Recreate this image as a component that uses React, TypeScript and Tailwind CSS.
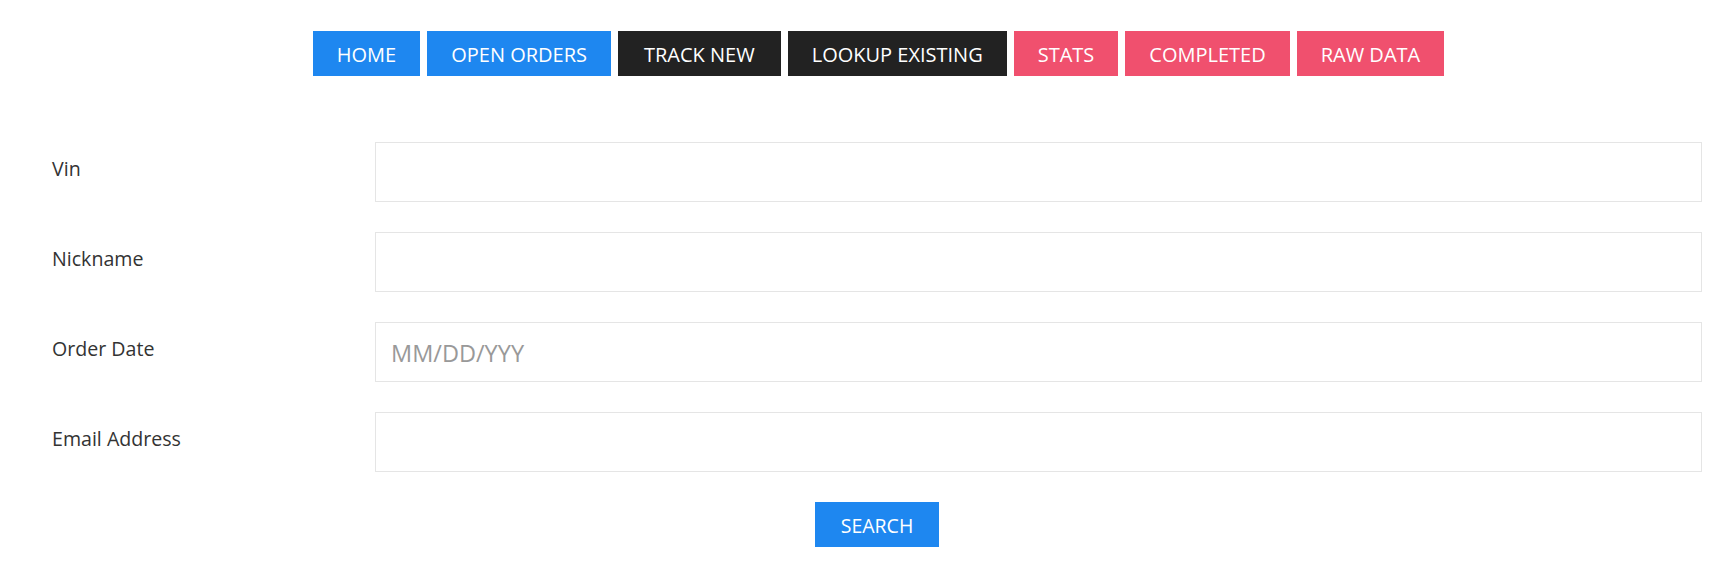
import React from "react";

const navItems: { label: string; cls: string }[] = [
  { label: "HOME", cls: "bg-[#1e87f0] px-6" },
  { label: "OPEN ORDERS", cls: "bg-[#1e87f0] px-6" },
  { label: "TRACK NEW", cls: "bg-[#222222] px-[26px]" },
  { label: "LOOKUP EXISTING", cls: "bg-[#222222] px-6" },
  { label: "STATS", cls: "bg-[#f0506e] px-6" },
  { label: "COMPLETED", cls: "bg-[#f0506e] px-6" },
  { label: "RAW DATA", cls: "bg-[#f0506e] px-6" },
];

const fields: { label: string; placeholder?: string }[] = [
  { label: "Vin" },
  { label: "Nickname" },
  { label: "Order Date", placeholder: "MM/DD/YYY" },
  { label: "Email Address" },
];

export default function App() {
  return (
    <div className="min-h-screen bg-white font-['Open_Sans',sans-serif]">
      <nav className="flex justify-center gap-[7px] pt-[31px] pl-[24px]">
        {navItems.map((n) => (
          <a
            key={n.label}
            href="#"
            className={`${n.cls} flex h-[45px] items-center pt-[3px] text-[20px] leading-none text-white`}
          >
            {n.label}
          </a>
        ))}
      </nav>
      <form className="mt-[66px] flex flex-col gap-[30px] pl-[52px] pr-[31px]">
        {fields.map((f) => (
          <div key={f.label} className="flex items-start">
            <label className="w-[323px] shrink-0 pt-[13px] text-[19.6px] leading-[28px] text-[#333333]">
              {f.label}
            </label>
            <input
              type="text"
              placeholder={f.placeholder}
              className="h-[60px] min-w-0 flex-1 border border-[#e5e5e5] bg-white pl-[15px] pr-4 pt-[2px] text-[23.5px] text-[#666] outline-none placeholder:text-[#999999]"
            />
          </div>
        ))}
      </form>
      <div className="mt-[30px] flex justify-center pl-[21px]">
        <button
          type="button"
          className="flex h-[45px] items-center bg-[#1e87f0] px-[26px] pt-[3px] text-[19.5px] leading-none text-white"
        >
          SEARCH
        </button>
      </div>
    </div>
  );
}
